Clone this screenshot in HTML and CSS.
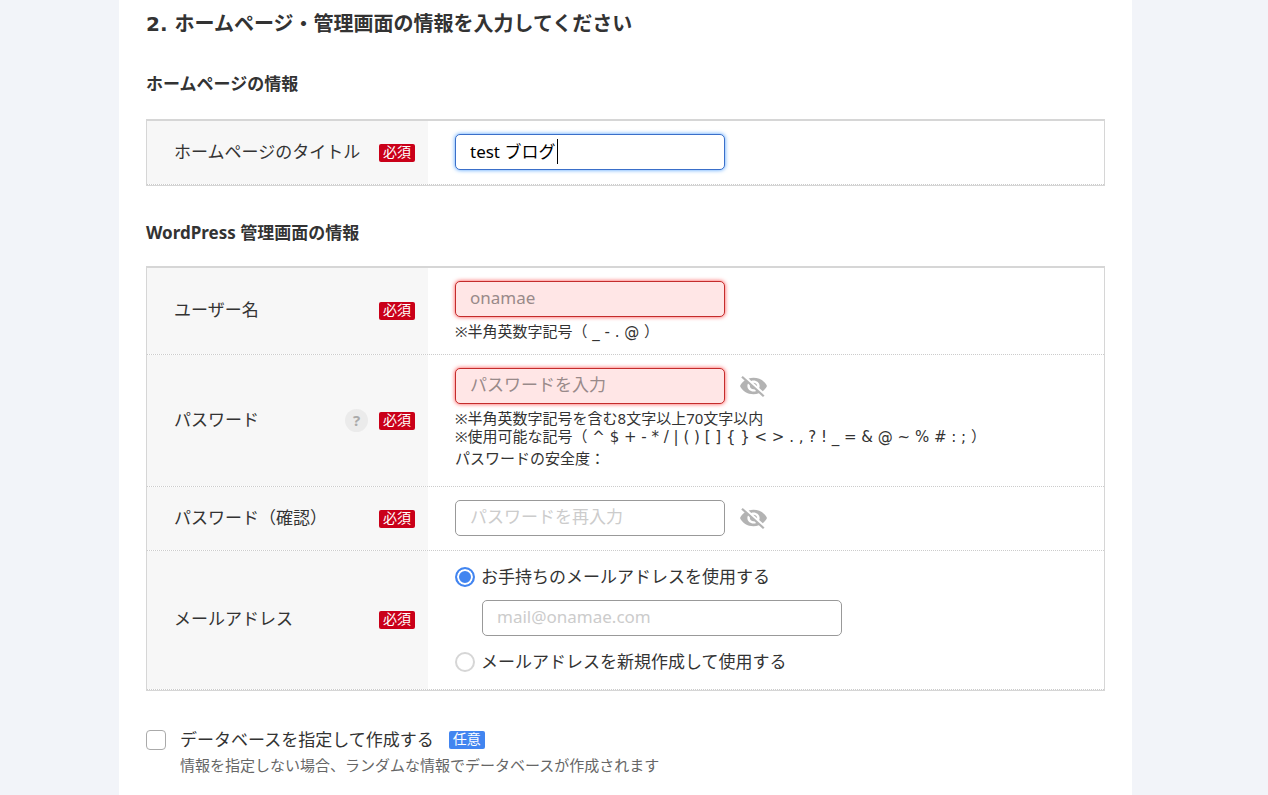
FILE: index.html
```html
<!DOCTYPE html>
<html lang="ja">
<head>
<meta charset="utf-8">
<meta name="viewport" content="width=device-width, initial-scale=1">
<title>ホームページ・管理画面の情報</title>
<link rel="stylesheet" href="styles.css">
</head>
<body>
<svg class="sprite" aria-hidden="true">
  <symbol id="eye-off" viewBox="1 2 22 20" preserveAspectRatio="none">
    <path d="M12 7c2.76 0 5 2.24 5 5 0 .65-.13 1.26-.36 1.83l2.92 2.92c1.51-1.26 2.7-2.89 3.43-4.75-1.73-4.39-6-7.500-11-7.500-1.400 0-2.740.25-3.980.7l2.160 2.160C10.740 7.130 11.350 7 12 7zM2 4.270l2.280 2.280.46.46C3.080 8.300 1.780 10.020 1 12c1.730 4.390 6 7.500 11 7.500 1.550 0 3.030-.3 4.380-.84l.42.42L19.730 22 21 20.730 3.270 3 2 4.270zM7.530 9.800l1.550 1.550c-.05.21-.08.43-.08.65 0 1.660 1.340 3 3 3 .22 0 .44-.03.65-.08l1.550 1.550c-.67.33-1.410.53-2.200.53-2.760 0-5-2.240-5-5 0-.79.2-1.530.53-2.200zm4.310-.78l3.150 3.150.02-.16c0-1.660-1.340-3-3-3l-.17.01z"/>
  </symbol>
</svg>
<main class="page">
  <form class="form">
    <h2 class="form-title">2. ホームページ・管理画面の情報を入力してください</h2>

    <section class="section">
      <h3 class="section-title section-title-first">ホームページの情報</h3>
      <div class="fields">
        <div class="row">
          <div class="head"><label class="name" for="site-title">ホームページのタイトル</label><span class="badge">必須</span></div>
          <div class="cell">
            <div class="input-wrap">
              <input class="input is-focused" id="site-title" type="text" value="test ブログ">
              <span class="caret"></span>
            </div>
          </div>
        </div>
      </div>
    </section>

    <section class="section">
      <h3 class="section-title">WordPress 管理画面の情報</h3>
      <div class="fields">
        <div class="row">
          <div class="head"><label class="name" for="user">ユーザー名</label><span class="badge">必須</span></div>
          <div class="cell">
            <input class="input is-error" id="user" type="text" placeholder="onamae">
            <p class="hint">※半角英数字記号<span class="symbols">（ _ - . @ ）</span></p>
          </div>
        </div>
        <div class="row">
          <div class="head"><label class="name" for="pass">パスワード</label><button class="help" type="button" aria-label="ヘルプ">?</button><span class="badge">必須</span></div>
          <div class="cell">
            <div class="password">
              <input class="input is-error" id="pass" type="password" placeholder="パスワードを入力">
              <button class="eye" type="button" aria-label="パスワードを表示"><svg class="eye-icon"><use href="#eye-off"/></svg></button>
            </div>
            <p class="hint">※半角英数字記号を含む8文字以上70文字以内<br>※使用可能な記号<span class="symbols">（ ^ $ + - * / | ( ) [ ] { } &lt; &gt; . , ? ! _ = &amp; @ ~ % # : ; ）</span></p>
            <p class="strength">パスワードの安全度：</p>
          </div>
        </div>
        <div class="row">
          <div class="head"><label class="name" for="pass2">パスワード（確認）</label><span class="badge">必須</span></div>
          <div class="cell">
            <div class="password">
              <input class="input" id="pass2" type="password" placeholder="パスワードを再入力">
              <button class="eye" type="button" aria-label="パスワードを表示"><svg class="eye-icon"><use href="#eye-off"/></svg></button>
            </div>
          </div>
        </div>
        <div class="row">
          <div class="head"><label class="name" for="mail">メールアドレス</label><span class="badge">必須</span></div>
          <div class="cell">
            <label class="choice"><input class="radio" type="radio" name="mailtype" checked>お手持ちのメールアドレスを使用する</label>
            <input class="input input-mail" id="mail" type="email" placeholder="mail@onamae.com">
            <label class="choice"><input class="radio" type="radio" name="mailtype">メールアドレスを新規作成して使用する</label>
          </div>
        </div>
      </div>
    </section>

    <div class="database">
      <input class="check" id="db" type="checkbox">
      <div>
        <div class="database-head"><label for="db">データベースを指定して作成する</label><span class="badge badge-optional">任意</span></div>
        <p class="database-note">情報を指定しない場合、ランダムな情報でデータベースが作成されます</p>
      </div>
    </div>
  </form>
</main>
</body>
</html>
```
FILE: styles.css
```css
* {
  box-sizing: border-box;
}

body {
  margin: 0;
  padding-right: 17px;
  background: #f2f4f9;
  color: #333;
  font: 17px/26px "Noto Sans", "Noto Sans CJK JP", sans-serif;
}

h2, h3, p {
  margin: 0;
}

input, button {
  font: inherit;
  margin: 0;
}

.sprite {
  position: absolute;
  width: 0;
  height: 0;
}

.page {
  max-width: 1013px;
  min-height: 100vh;
  margin: 0 auto;
  padding: 11px 27px 16px;
  background: #fff;
}

.form-title {
  font-family: "DejaVu Sans", "Noto Sans CJK JP", sans-serif;
  font-size: 20px;
  line-height: 26px;
}

.section {
  padding-top: 34px;
}

.section-title {
  margin-bottom: 20px;
  font-size: 17px;
  line-height: 26px;
}

.section-title-first {
  margin-bottom: 22px;
}

.fields {
  border: 1px solid #d6d6d6;
  border-top-width: 2px;
}

.row {
  display: grid;
  grid-template-columns: 281px 1fr;
  border-bottom: 1px dotted #ccc;
}

.head {
  display: flex;
  align-items: center;
  gap: 11px;
  padding: 0 13px 0 27px;
  background: #f7f7f7;
}

.name {
  flex: 1;
  padding-bottom: 2px;
}

.badge {
  width: 36px;
  height: 18px;
  border-radius: 2px;
  background: #ca0019;
  color: #fff;
  font-size: 14px;
  line-height: 16px;
  text-align: center;
}

.badge-optional {
  background: #4285f0;
}

.help {
  width: 23px;
  height: 23px;
  padding: 0;
  border: 0;
  border-radius: 50%;
  background: #ebebeb;
  color: #aaa;
  font-size: 15px;
  font-weight: bold;
  line-height: 23px;
}

.cell {
  padding: 13px 27px 14px;
}

.input-wrap {
  position: relative;
}

.caret {
  position: absolute;
  top: 5px;
  left: 102px;
  width: 1px;
  height: 25px;
  background: #000;
}

.input {
  display: block;
  width: 270px;
  height: 36px;
  padding: 0 14px 3px;
  border: 1px solid #999;
  border-radius: 5px;
  outline: 0;
  background: #fff;
  color: #000;
}

.input::placeholder {
  color: #ccc;
  opacity: 1;
}

.is-focused {
  border-color: #3a6fc9;
  box-shadow: 0 0 4px #4d9fff;
}

.is-error {
  border-color: #c42c2c;
  background: #ffe6e6;
  box-shadow: 0 0 4px #ff4d4d;
}

.is-error::placeholder {
  color: #998a8a;
}

.input-mail {
  width: 360px;
  max-width: 100%;
  margin: 10px 0 13px 27px;
}

.hint {
  padding-top: 5px;
  font-size: 15px;
  line-height: 18px;
}

.symbols {
  font-family: "DejaVu Sans", "Noto Sans CJK JP", sans-serif;
  line-height: 12px;
}

.strength {
  padding: 4px 0 5px;
  font-size: 15px;
  line-height: 18px;
}

.password {
  display: flex;
  align-items: center;
  gap: 15px;
}

.eye {
  display: flex;
  padding: 0;
  border: 0;
  background: none;
}

.eye-icon {
  width: 27px;
  height: 22px;
  fill: #b3b3b3;
}

.choice {
  display: flex;
  align-items: center;
  gap: 6px;
}

.radio {
  appearance: none;
  width: 20px;
  height: 20px;
  border: 2px solid #d6d6d6;
  border-radius: 50%;
  background: #fff;
}

.radio:checked {
  border-color: #4285f0;
  background: #4285f0;
  box-shadow: inset 0 0 0 2px #fff;
}

.database {
  display: flex;
  gap: 14px;
  padding-top: 36px;
}

.check {
  appearance: none;
  width: 20px;
  height: 20px;
  margin-top: 3px;
  border: 1px solid #aaa;
  border-radius: 4px;
  background: #fff;
}

.database-head {
  display: flex;
  align-items: center;
  gap: 15px;
}

.database-note {
  color: #666;
  font-size: 15px;
  line-height: 24px;
}
```
